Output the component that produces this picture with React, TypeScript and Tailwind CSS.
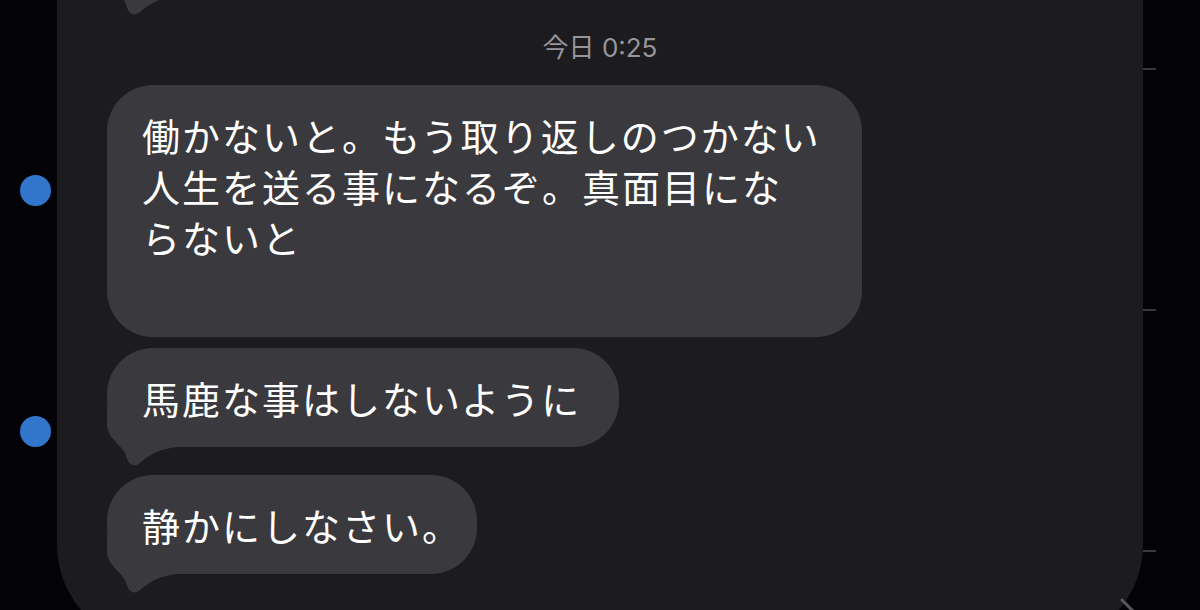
function Tail({ className }: { className?: string }) {
  return (
    <svg
      className={className}
      width="70"
      height="60"
      viewBox="0 0 70 60"
      fill="none"
      xmlns="http://www.w3.org/2000/svg"
    >
      <path
        d="M0 0 V18 C0 30 14 38 18 46 C20 51 21 56 25 58 C28 59 30 58 33 56 C42 48 52 42 70 40 V0 Z"
        fill="#3a393e"
      />
    </svg>
  )
}

function Bubble({
  children,
  tail,
  className = "",
}: {
  children: React.ReactNode
  tail?: boolean
  className?: string
}) {
  return (
    <div
      className={`relative rounded-[46px] bg-[#3a393e] pl-[35px] pt-[24px] text-[38px] leading-[51px] tracking-[2px] text-white ${className}`}
    >
      <span className="relative z-10">{children}</span>
      {tail && <Tail className="absolute -bottom-[20px] left-0" />}
    </div>
  )
}

export default function App() {
  return (
    <div className="relative flex h-[610px] w-[1200px] items-start overflow-hidden bg-[#030206] font-['Noto_Sans_CJK_JP',sans-serif]">
      {/* unread markers */}
      <div className="flex w-[57px] shrink-0 flex-col items-start gap-[210px] pl-[20px] pt-[175px]">
        <span className="h-[31px] w-[31px] rounded-full bg-[#3176cb]" />
        <span className="h-[31px] w-[31px] rounded-full bg-[#3176cb]" />
      </div>

      {/* conversation panel */}
      <div className="relative flex h-[645px] w-[1086px] shrink-0 flex-col items-start rounded-b-[100px] bg-[#1c1c1e] pl-[50px]">
        {/* previous bubble tail */}
        <Tail className="absolute -top-[44px] left-[50px]" />

        <div className="self-stretch pr-[50px] pt-[33px] text-center font-['Inter','Noto_Sans_CJK_JP',sans-serif] text-[26px] leading-[30px] text-[#95959b]">
          今日 0:25
        </div>

        <Bubble className="mt-[22px] pb-[75px] pr-[41px]">
          働かないと。もう取り返しのつかない
          <br />
          人生を送る事になるぞ。真面目にな
          <br />
          らないと
        </Bubble>

        <Bubble tail className="mt-[11px] pb-[24px] pr-[38px]">
          馬鹿な事はしないように
        </Bubble>

        <Bubble tail className="mt-[28px] pb-[24px] pr-[15px]">
          静かにしなさい。
        </Bubble>
      </div>

      {/* right edge ticks */}
      <div className="flex w-[13px] shrink-0 flex-col gap-[239px] pt-[68px]">
        <span className="h-[2px] bg-[#3a3a3e]" />
        <span className="h-[2px] bg-[#3a3a3e]" />
        <span className="h-[2px] bg-[#3a3a3e]" />
      </div>

      {/* chevron peeking at the bottom */}
      <svg className="absolute left-[1116px] top-[594px]" width="24" height="24" viewBox="0 0 24 24" fill="none">
        <path d="M6 6 L18 18" stroke="#55555a" strokeWidth="3" strokeLinecap="round" />
      </svg>
    </div>
  )
}
